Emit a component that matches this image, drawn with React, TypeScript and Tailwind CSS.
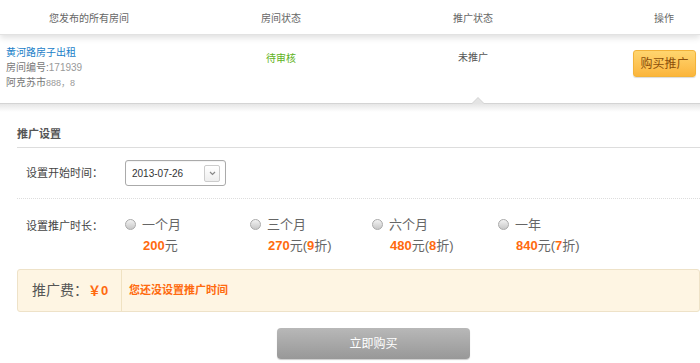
import { useState } from 'react';

const plans = [
  { label: '一个月', price: '200', discount: '' },
  { label: '三个月', price: '270', discount: '9' },
  { label: '六个月', price: '480', discount: '8' },
  { label: '一年', price: '840', discount: '7' },
];

const font = { fontFamily: '"Liberation Sans", "Noto Sans CJK SC", sans-serif' };

export default function App() {
  const [plan, setPlan] = useState<number | null>(null);

  return (
    <div className="w-[700px] h-[363px] overflow-hidden bg-white text-[11px] text-[#555]" style={font}>
      {/* table header */}
      <div className="relative z-10 flex h-[35px] items-center bg-white pt-[3px] text-[10px] text-[#666] shadow-[0_3px_6px_rgba(0,0,0,0.12)] border-b border-[#e2e2e2]">
        <div className="w-[178px] shrink-0 text-center">您发布的所有房间</div>
        <div className="w-[206px] shrink-0 text-center">房间状态</div>
        <div className="w-[178px] shrink-0 text-center">推广状态</div>
        <div className="w-[204px] shrink-0 text-center">操作</div>
      </div>

      {/* room row */}
      <div className="relative flex h-[69px] items-start border-b border-[#d4d4d4] bg-white">
        <div className="w-[178px] shrink-0 pl-[6px] pt-[10px] text-[10px] leading-[15px]">
          <div className="text-[#1a80c8]">黄河路房子出租</div>
          <div className="text-[#777]">房间编号:<span className="text-[10px] text-[#999]">171939</span></div>
          <div className="text-[#777]">阿克苏市<span className="text-[9px] text-[#999]">888，8</span></div>
        </div>
        <div className="w-[206px] shrink-0 pt-[16px] text-center text-[10px] text-[#5fb322]">待审核</div>
        <div className="w-[178px] shrink-0 pt-[15px] text-center text-[10px] text-[#555]">未推广</div>
        <div className="flex w-[138px] shrink-0 justify-end pr-[4px] pt-[15px]">
          <button className="h-[27px] w-[63px] rounded-[3px] border border-[#f2b33a] bg-gradient-to-b from-[#ffd56e] to-[#fbb53b] text-[12px] text-[#8a4e0a] shadow-[0_1px_1px_rgba(0,0,0,0.15)]">
            购买推广
          </button>
        </div>
        <div className="absolute bottom-[-1px] left-[471px] h-0 w-0 border-x-[7px] border-b-[7px] border-x-transparent border-b-[#d4d4d4]" />
        <div className="absolute bottom-[-1px] left-[472px] h-0 w-0 border-x-[6px] border-b-[6px] border-x-transparent border-b-[#e4e4e4]" />
      </div>
      <div className="h-[8px] bg-gradient-to-b from-[#e6e6e6] to-white" />

      {/* settings */}
      <div className="pl-[17px]">
        <div className="flex h-[36px] items-end border-b border-[#ddd] pb-[5px] text-[11px] font-bold text-[#555]">推广设置</div>

        <div className="flex h-[51px] items-center border-b border-dotted border-[#ddd] pl-[9px]">
          <div className="w-[99px] text-[11px] text-[#444]">设置开始时间：</div>
          <div className="flex h-[26px] w-[101px] items-center justify-between rounded-[3px] border border-[#aaa] pl-[6px] pr-[5px] shadow-[inset_0_1px_1px_rgba(0,0,0,0.05)]">
            <span className="text-[10px] text-[#333]">2013-07-26</span>
            <span className="flex h-[17px] w-[16px] items-center justify-center rounded-[2px] border border-[#ccc] bg-gradient-to-b from-white to-[#eee]">
              <svg width="7" height="5" viewBox="0 0 7 5"><path d="M1 1l2.5 2.5L6 1" stroke="#888" strokeWidth="1.2" fill="none" /></svg>
            </span>
          </div>
        </div>

        <div className="flex h-[70px] pl-[9px] pt-[16px]">
          <div className="w-[99px] pt-[3px] text-[11px] text-[#444]">设置推广时长：</div>
          {plans.map((p, i) => (
            <div
              key={p.label}
              className={i === 0 ? 'w-[125px] shrink-0' : i === 1 ? 'w-[122px] shrink-0' : i === 2 ? 'w-[126px] shrink-0' : 'w-[120px] shrink-0'}
              onClick={() => setPlan(i)}
            >
              <div className="flex items-center gap-[6px]">
                <span className="flex h-[11px] w-[11px] items-center justify-center rounded-full border border-[#aaa] bg-gradient-to-b from-[#f2f2f2] to-[#c8c8c8]">
                  {plan === i && <span className="h-[5px] w-[5px] rounded-full bg-[#555]" />}
                </span>
                <span className="text-[13px] text-[#666]">{p.label}</span>
              </div>
              <div className="mt-[1px] pl-[18px] text-[13px] text-[#666]">
                <span className="font-bold text-[#ff6a0f]">{p.price}</span>元
                {p.discount && (
                  <>
                    (<span className="font-bold text-[#ff6a0f]">{p.discount}</span>折)
                  </>
                )}
              </div>
            </div>
          ))}
        </div>

        <div className="flex h-[43px] items-center rounded-[3px] border border-[#eee2c8] bg-[#fef5e3]">
          <div className="flex h-full w-[104px] items-center border-r border-[#f0e2c2] pl-[14px]">
            <span className="text-[14px] text-[#555]">推广费：</span>
            <span className="text-[13px] font-bold text-[#ff6a0f]">￥0</span>
          </div>
          <div className="pl-[7px] text-[11px] font-bold text-[#ff6a0f]">您还没设置推广时间</div>
        </div>

        <div className="flex pl-[260px] pt-[16px]">
          <button className="h-[31px] w-[193px] rounded-[4px] bg-gradient-to-b from-[#b8b8b8] to-[#989898] text-[12px] text-white shadow-[0_1px_1px_rgba(0,0,0,0.2)]">
            立即购买
          </button>
        </div>
      </div>
    </div>
  );
}
